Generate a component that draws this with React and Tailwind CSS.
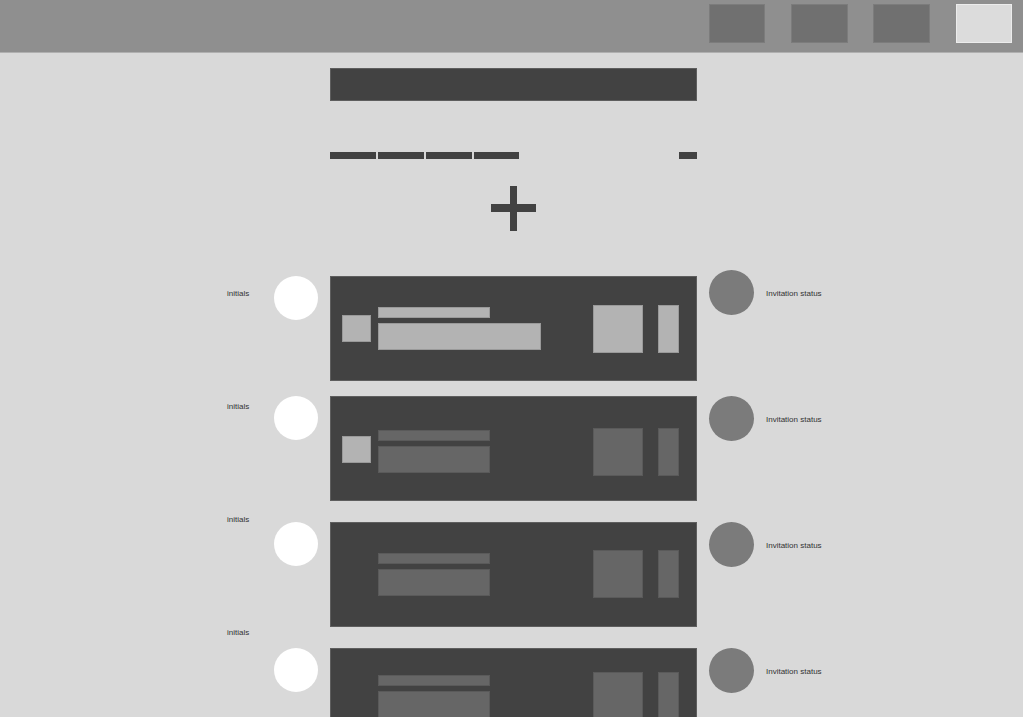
import React from "react";

const rows = [
  { light: true, square: "light", offset: 6, barTop: 31, sqTop: 39, bottomW: 163, rsTop: 29 },
  { light: false, square: "light", offset: 0, barTop: 34, sqTop: 40, bottomW: 112, rsTop: 32 },
  { light: false, square: null, offset: 0, barTop: 31, sqTop: 39, bottomW: 112, rsTop: 28 },
  { light: false, square: null, offset: 0, barTop: 27, sqTop: 35, bottomW: 112, rsTop: 24 },
];

function Card({ r }) {
  const fill = r.light ? "bg-[#b3b3b3] border-[#9a9a9a]" : "bg-[#666666] border-[#5a5a5a]";
  return (
    <div className="w-[367px] h-[105px] shrink-0 bg-[#424242] border border-[#5e5e5e] box-border flex items-start pl-[11px] pr-[17px]">
      <div className="w-[29px] shrink-0" style={{ marginTop: r.sqTop - 1 }}>
        {r.square && <div className="w-[29px] h-[27px] bg-[#b3b3b3] border border-[#9a9a9a] box-border" />}
      </div>
      <div className="ml-[7px] flex flex-col" style={{ marginTop: r.barTop - 1 }}>
        <div className={`w-[112px] h-[11px] border box-border ${fill}`} />
        <div className={`mt-[5px] h-[27px] border box-border ${fill}`} style={{ width: r.bottomW }} />
      </div>
      <div className="flex-1" />
      <div className="flex gap-[15px]" style={{ marginTop: r.rsTop - 1 }}>
        <div className={`w-[50px] h-[48px] border box-border ${fill}`} />
        <div className={`w-[21px] h-[48px] border box-border ${fill}`} />
      </div>
    </div>
  );
}

export default function App() {
  const font = { fontFamily: '"Liberation Sans", Arial, sans-serif' };
  const gaps = [0, 15, 21, 21];
  return (
    <div className="w-[1023px] h-[717px] overflow-hidden bg-[#d9d9d9]" style={font}>
      <header className="h-[53px] bg-[#8f8f8f] border-b border-[#b0b0b0] box-border flex items-start justify-end pr-[11px] pt-[4px]">
        <div className="w-[56px] h-[39px] bg-[#707070] border border-[#7c7c7c] box-border" />
        <div className="ml-[26px] w-[57px] h-[39px] bg-[#707070] border border-[#7c7c7c] box-border" />
        <div className="ml-[25px] w-[57px] h-[39px] bg-[#707070] border border-[#7c7c7c] box-border" />
        <div className="ml-[26px] w-[56px] h-[39px] bg-[#dcdcdc] border border-[#ececec] box-border" />
      </header>

      <div className="pl-[330px]">
        <div className="mt-[15px] w-[367px] h-[33px] bg-[#424242] border border-[#5e5e5e] box-border" />
        <div className="mt-[51px] w-[367px] flex items-start">
          <div className="flex gap-[2px]">
            <div className="w-[46px] h-[7px] bg-[#424242]" />
            <div className="w-[46px] h-[7px] bg-[#424242]" />
            <div className="w-[46px] h-[7px] bg-[#424242]" />
            <div className="w-[45px] h-[7px] bg-[#424242]" />
          </div>
          <div className="flex-1" />
          <div className="w-[18px] h-[7px] bg-[#424242]" />
        </div>
        <div className="mt-[27px] w-[367px] flex justify-center">
          <div className="relative w-[45px] h-[45px]">
            <div className="absolute left-[19px] top-0 w-[7px] h-[45px] bg-[#424242]" />
            <div className="absolute left-0 top-[18px] w-[45px] h-[8px] bg-[#424242]" />
          </div>
        </div>
      </div>

      <div className="mt-[39px] pl-[227px] flex items-start">
        <div className="w-[47px] shrink-0 flex flex-col pt-[19px]">
          {rows.map((_, i) => (
            <div key={i} className="h-[113px] text-[8px] leading-[10px] text-[#333333]">
              initials
            </div>
          ))}
        </div>
        <div className="flex flex-col">
          {rows.map((r, i) => (
            <div key={i} className="flex items-start" style={{ marginTop: gaps[i] }}>
              <div className="w-[44px] h-[44px] rounded-full bg-white shrink-0" style={{ marginTop: r.offset }} />
              <div className="ml-[12px]" style={{ marginTop: r.offset }}>
                <Card r={r} />
              </div>
              <div className="ml-[12px] flex items-center">
                <div className="w-[45px] h-[45px] rounded-full bg-[#7b7b7b] shrink-0" />
                <div className="ml-[12px] pt-[3px] text-[8px] leading-[10px] text-[#333333] whitespace-nowrap">
                  Invitation status
                </div>
              </div>
            </div>
          ))}
        </div>
      </div>
    </div>
  );
}
